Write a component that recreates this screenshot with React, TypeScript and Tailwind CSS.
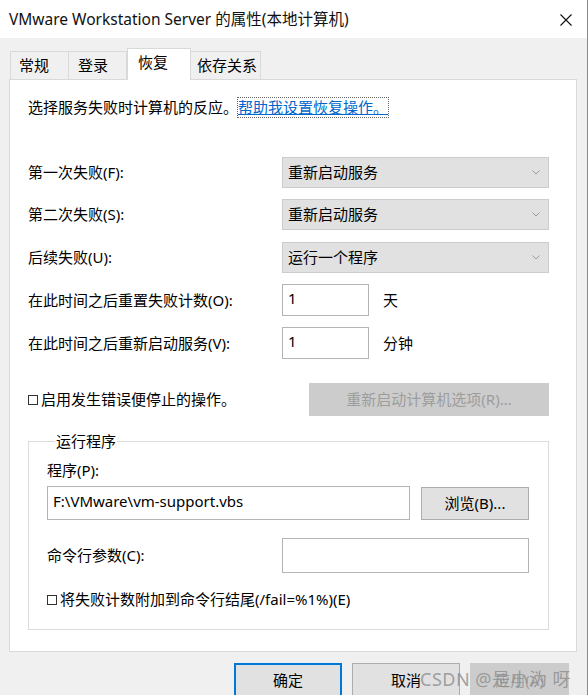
const FONT = "font-['Noto_Sans','Noto_Sans_CJK_SC',sans-serif]";

const TABS = [
  { label: "常规", width: "w-[59px]", pad: "pl-[8px]" },
  { label: "登录", width: "w-[59px]", pad: "pl-[9px]" },
  { label: "恢复", width: "w-[64px]", pad: "pl-[10px]", active: true },
  { label: "依存关系", width: "w-[71px]", pad: "pl-[6px]" },
];

const COMBOS = [
  { label: "第一次失败(F):", value: "重新启动服务", gap: "mt-[39px]" },
  { label: "第二次失败(S):", value: "重新启动服务", gap: "mt-[11px]" },
  { label: "后续失败(U):", value: "运行一个程序", gap: "mt-[12px]" },
];

function Chevron() {
  return (
    <svg width="8" height="5" viewBox="0 0 8 5" fill="none" className="mr-[8px]">
      <path d="M0.5 0.5L4 4L7.5 0.5" stroke="#9a9a9a" strokeWidth="1" />
    </svg>
  );
}

function Checkbox() {
  return <span className="inline-block w-[10px] h-[10px] border border-[#333] mr-[3px] shrink-0" />;
}

export default function App() {
  return (
    <div className={`${FONT} w-[588px] h-[695px] overflow-hidden bg-[#f0f0f0] text-[15px] leading-[21px] text-black border-r border-[#8a8a8a] relative`}>
      {/* Title bar */}
      <div className="h-[38px] bg-white flex items-center justify-between pl-[9px] pr-[15px]">
        <span className="text-[15.5px] text-[#111]">VMware Workstation Server 的属性(本地计算机)</span>
        <svg width="12" height="12" viewBox="0 0 12 12" className="mt-[2px]">
          <path d="M0.5 0.5L11.5 11.5M11.5 0.5L0.5 11.5" stroke="#111" strokeWidth="1.1" />
        </svg>
      </div>

      {/* Tabs */}
      <div className="mt-[10px] ml-[10px] h-[31px] flex items-end relative z-10">
        {TABS.map((tab) =>
          tab.active ? (
            <div
              key={tab.label}
              className={`${tab.width} ${tab.pad} h-[32px] -mb-px bg-white border border-b-0 border-[#d9d9d9] pt-[3px]`}
            >
              {tab.label}
            </div>
          ) : (
            <div
              key={tab.label}
              className={`${tab.width} ${tab.pad} h-[28px] bg-[#f0f0f0] border border-b-0 border-[#d9d9d9] -ml-px first:ml-0 pt-[3px]`}
            >
              {tab.label}
            </div>
          )
        )}
      </div>

      {/* Panel */}
      <div className="ml-[9px] w-[568px] h-[573px] bg-white border border-[#d9d9d9] pl-[18px] pt-[17px]">
        <div className="flex items-center h-[21px]">
          <span>选择服务失败时计算机的反应。</span>
          <span className="text-[#0066cc] underline border border-dotted border-[#666] h-[21px] leading-[19px] -ml-px">
            帮助我设置恢复操作。
          </span>
        </div>

        {COMBOS.map((row) => (
          <div key={row.label} className={`${row.gap} flex items-center h-[31px]`}>
            <span className="w-[254px]">{row.label}</span>
            <div className="w-[267px] h-[31px] bg-[#e1e1e1] border border-[#cccccc] flex items-center justify-between pl-[5px]">
              <span>{row.value}</span>
              <Chevron />
            </div>
          </div>
        ))}

        <div className="mt-[11px] flex items-center h-[32px]">
          <span className="w-[254px]">在此时间之后重置失败计数(O):</span>
          <div className="w-[87px] h-[32px] border border-[#b4b4b4] pl-[5px] pt-[3px]">1</div>
          <span className="ml-[14px]">天</span>
        </div>
        <div className="mt-[11px] flex items-center h-[32px]">
          <span className="w-[254px]">在此时间之后重新启动服务(V):</span>
          <div className="w-[87px] h-[32px] border border-[#b4b4b4] pl-[5px] pt-[3px]">1</div>
          <span className="ml-[14px]">分钟</span>
        </div>

        <div className="mt-[24px] flex items-center h-[33px]">
          <div className="w-[281px] flex items-center">
            <Checkbox />
            <span>启用发生错误便停止的操作。</span>
          </div>
          <div className="w-[240px] h-[33px] bg-[#cccccc] border border-[#cccccc] flex items-center justify-center text-[#9d9d9d]">
            重新启动计算机选项(R)...
          </div>
        </div>

        {/* Run program group */}
        <fieldset className="mt-[15px] w-[521px] border border-[#dcdcdc] pl-[18px] pb-[19px]">
          <legend className="ml-[8px] px-[1px]">运行程序</legend>
          <div className="mt-[8px] h-[21px]">程序(P):</div>
          <div className="mt-[5px] flex items-center">
            <div className="w-[363px] h-[34px] border border-[#b4b4b4] pl-[5px] pt-[4px]">F:\VMware\vm-support.vbs</div>
            <div className="ml-[11px] w-[108px] h-[33px] bg-[#e1e1e1] border border-[#adadad] flex items-center justify-center">
              浏览(B)...
            </div>
          </div>
          <div className="mt-[18px] flex items-center h-[35px]">
            <span className="w-[235px]">命令行参数(C):</span>
            <div className="w-[247px] h-[35px] border border-[#b4b4b4]" />
          </div>
          <div className="mt-[16px] flex items-center h-[21px]">
            <Checkbox />
            <span>将失败计数附加到命令行结尾(/fail=%1%)(E)</span>
          </div>
        </fieldset>
      </div>

      {/* Dialog buttons */}
      <div className="mt-[11px] flex pl-[234px] gap-[10px]">
        <div className="w-[108px] h-[34px] bg-[#e1e1e1] border-2 border-[#0078d7] flex items-center justify-center">确定</div>
        <div className="w-[108px] h-[34px] bg-[#e1e1e1] border border-[#adadad] flex items-center justify-center">取消</div>
        <div className="w-[99px] h-[34px] bg-[#cccccc] border border-[#cccccc] flex items-center justify-center text-[#9d9d9d]">应用(A)</div>
      </div>

      {/* Watermark */}
      <div className="absolute left-[420px] top-[668px] text-[18px] leading-[22px] tracking-[0.5px] text-[#8c8c8c]/80 whitespace-nowrap">
        CSDN @是小沩 呀
      </div>
    </div>
  );
}
